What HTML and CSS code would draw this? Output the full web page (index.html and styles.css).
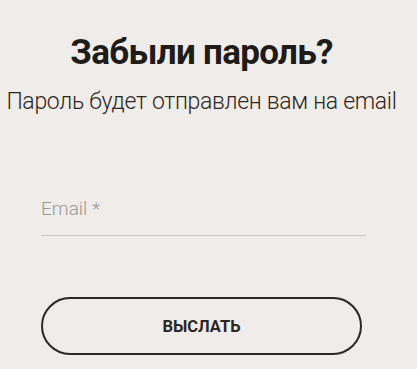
FILE: index.html
```html
<!DOCTYPE html>
<html lang="ru">
<head>
    <meta charset="UTF-8">
    <meta name="viewport" content="width=device-width, initial-scale=1.0">
    <title>Забыли пароль?</title>
    <link rel="stylesheet" href="styles.css">
</head>
<body>

<div class="container">
    <h1>Забыли пароль?</h1>
    <p class="description">Пароль будет отправлен вам на email</p>

    <form class="form">
        <label class="field">
            <input type="email" placeholder="Email *">
        </label>
        <button type="button">ВЫСЛАТЬ</button>
    </form>
</div>

</body>
</html>
```

FILE: styles.css
```css
body {
    margin: 0;
    padding: 0;
    background: #f0ece9;
    color: #231f1c;
    font-family: 'Roboto', sans-serif;
}
.container {
    width: 403px;
    padding-top: 33px;
    text-align: center;
}
h1 {
    margin: 0;
    font-size: 35px;
    line-height: 40px;
    font-weight: 700;
    letter-spacing: -0.7px;
    color: #1e1b19;
}
.description {
    margin: 15px 0 0;
    font-size: 23px;
    line-height: 28px;
    font-weight: 300;
    letter-spacing: -0.3px;
    color: #2b2724;
    white-space: nowrap;
}
.form {
    display: flex;
    flex-direction: column;
    margin: 0 41px;
    padding-top: 73px;
}
.field {
    display: block;
}
.field input {
    display: block;
    width: calc(100% + 4px);
    box-sizing: border-box;
    padding: 9px 0 15px;
    border: none;
    border-bottom: 1px solid #c9c7c5;
    background: transparent;
    font-family: 'Roboto', sans-serif;
    font-size: 19px;
    line-height: 22px;
    font-weight: 300;
    color: #333;
    outline: none;
}
.field input::placeholder {
    color: #999999;
}
button {
    margin-top: 61px;
    height: 58px;
    border: 2px solid #2b2724;
    border-radius: 29px;
    background: transparent;
    font-family: 'Roboto', sans-serif;
    font-size: 16.5px;
    font-weight: 700;
    color: #2b2724;
    cursor: pointer;
}
```
